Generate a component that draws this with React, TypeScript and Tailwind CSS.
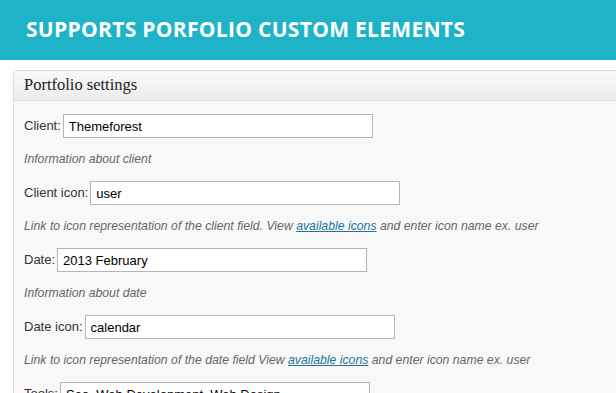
import React from 'react'

interface Field {
  label: string
  value: string
  help?: React.ReactNode
}

const Link = ({ children }: { children: React.ReactNode }) => (
  <a href="#" className="text-[#21759b] underline">
    {children}
  </a>
)

const fields: Field[] = [
  { label: 'Client:', value: 'Themeforest', help: 'Information about client' },
  {
    label: 'Client icon:',
    value: 'user',
    help: (
      <>
        Link to icon representation of the client field. View <Link>available icons</Link> and enter icon name ex. user
      </>
    ),
  },
  { label: 'Date:', value: '2013 February', help: 'Information about date' },
  {
    label: 'Date icon:',
    value: 'calendar',
    help: (
      <>
        Link to icon representation of the date field View <Link>available icons</Link> and enter icon name ex. user
      </>
    ),
  },
  { label: 'Tools:', value: 'Seo, Web Development, Web Design' },
]

function FieldRow({ field }: { field: Field }) {
  return (
    <div className="mb-[14px]">
      <div className="flex items-center gap-[2px]">
        <label className="text-[13px] text-[#333]">{field.label}</label>
        <input
          readOnly
          value={field.value}
          className="w-[310px] h-[24px] border border-[#b4b4b4] bg-white px-[5px] text-[13px] text-black outline-none"
        />
      </div>
      {field.help && (
        <p className="mt-[13px] text-[12.25px] leading-[16px] italic text-[#666]">{field.help}</p>
      )}
    </div>
  )
}

export default function App() {
  return (
    <div className="w-[616px] h-[393px] overflow-hidden bg-white" style={{ fontFamily: '"Liberation Sans", Arial, sans-serif' }}>
      {/* Banner */}
      <div className="h-[60px] bg-[#1fb3c8] flex items-center pl-[26px]">
        <h1
          className="text-white text-[21px] font-bold tracking-[0.3px]"
          style={{ fontFamily: '"Open Sans", Lato, sans-serif' }}
        >
          SUPPORTS PORFOLIO CUSTOM ELEMENTS
        </h1>
      </div>

      {/* Panel */}
      <div className="mt-[10px] ml-[13px] w-[620px] border border-[#dcdcdc] rounded-tl-[3px] bg-[#f8f8f8]">
        <div className="h-[30px] flex items-center pl-[10px] border-b border-[#dcdcdc] bg-gradient-to-b from-[#f9f9f9] to-[#ececec]">
          <h2 className="text-[16.5px] text-[#222]" style={{ fontFamily: '"Liberation Serif", Georgia, serif' }}>
            Portfolio settings
          </h2>
        </div>
        <div className="pt-[13px] pl-[10px]">
          {fields.map(f => (
            <FieldRow key={f.label} field={f} />
          ))}
        </div>
      </div>
    </div>
  )
}
